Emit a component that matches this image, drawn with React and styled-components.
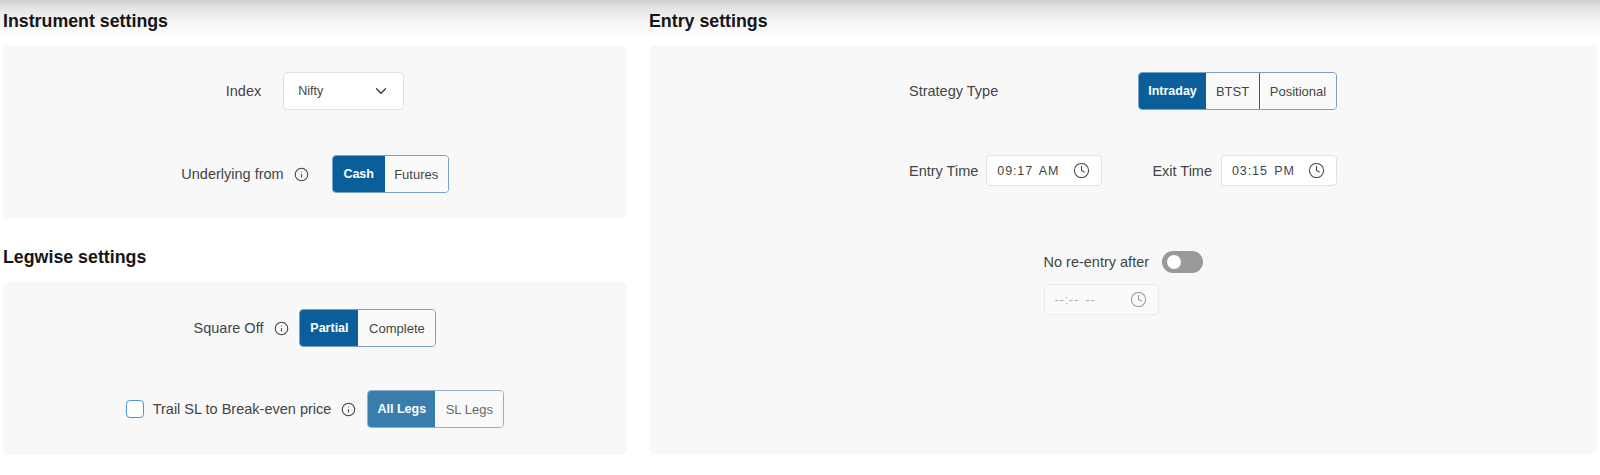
import React from "react";
import styled, { createGlobalStyle } from "styled-components";
import { ChevronDown, Clock, Info } from "lucide-react";

const GlobalStyle = createGlobalStyle`
  html, body {
    margin: 0;
    padding: 0;
    background: #fff;
    font-family: "Liberation Sans", Arial, sans-serif;
    color: #333;
  }
`;

const Page = styled.div`
  display: grid;
  grid-template-columns: 624px 948px;
  column-gap: 22px;
  height: 475px;
  padding: 0 3px;
  box-sizing: border-box;
  background: linear-gradient(#cfcfcf 0, #e6e6e6 9px, #f6f6f6 24px, #fff 38px);
  overflow: hidden;
`;

const Column = styled.div`
  display: flex;
  flex-direction: column;
`;

const Heading = styled.h3`
  margin: 0;
  height: 42px;
  padding-bottom: 3px;
  display: flex;
  align-items: center;
  font-size: 17.8px;
  font-weight: 700;
  color: #151515;
`;

const LowerHeading = styled(Heading)`
  margin-top: 17px;
  height: 42px;
  padding-bottom: 4px;
`;

const Panel = styled.div`
  background: #f8f8f8;
  border-radius: 6px;
  display: flex;
  flex-direction: column;
  align-items: center;
  box-sizing: border-box;
  height: ${(p) => p.$height}px;
  padding-top: ${(p) => p.$top}px;
`;

const Row = styled.div`
  display: flex;
  align-items: center;
  height: 38px;
  margin-top: ${(p) => p.$mt || 0}px;
`;

const Label = styled.span`
  font-size: 14.5px;
  color: #444;
  white-space: nowrap;
  margin-right: ${(p) => p.$mr || 0}px;
`;

const InfoIcon = styled(Info)`
  width: 15px;
  height: 15px;
  color: #444;
  stroke-width: 1.7;
  margin: 0 ${(p) => p.$mr}px 0 ${(p) => p.$ml}px;
  flex-shrink: 0;
`;

const Select = styled.div`
  width: 121px;
  height: 38px;
  box-sizing: border-box;
  display: flex;
  align-items: center;
  justify-content: space-between;
  padding: 0 13px 0 14px;
  background: #fff;
  border: 1px solid #dbe3ea;
  border-radius: 4px;
  font-size: 12.5px;
  color: #444;
`;

const Toggle = styled.div`
  display: flex;
  height: 38px;
  box-sizing: border-box;
  border: 1px solid #7a9fc4;
  border-radius: 4px;
  overflow: hidden;
  opacity: ${(p) => (p.$faded ? 0.8 : 1)};
`;

const ToggleButton = styled.div`
  width: ${(p) => p.$width}px;
  display: flex;
  align-items: center;
  justify-content: center;
  box-sizing: border-box;
  font-size: ${(p) => (p.$active ? 12.5 : 13)}px;
  font-weight: ${(p) => (p.$active ? 700 : 400)};
  color: ${(p) => (p.$active ? "#fff" : "#444")};
  background: ${(p) => (p.$active ? "#0a5f9a" : "#fafafa")};
  border-left: ${(p) => (p.$divider ? "1px solid #1d5f9c" : "none")};
`;

const EntryGrid = styled.div`
  width: 428px;
  display: flex;
  flex-direction: column;
`;

const SpacedRow = styled(Row)`
  justify-content: space-between;
`;

const TimeRow = styled(SpacedRow)`
  height: 31px;
  margin-top: 45px;
`;

const TimeField = styled.div`
  display: flex;
  align-items: center;
`;

const TimeBox = styled.div`
  width: ${(p) => (p.$disabled ? 115 : 116)}px;
  height: 31px;
  box-sizing: border-box;
  display: flex;
  align-items: center;
  justify-content: space-between;
  padding: 0 11px 0 10px;
  background: ${(p) => (p.$disabled ? "#fafafa" : "#fff")};
  border: 1px solid ${(p) => (p.$disabled ? "#e8ecef" : "#dbe3ea")};
  border-radius: 4px;
  font-size: 12.5px;
  letter-spacing: 0.9px;
  word-spacing: 2px;
  color: ${(p) => (p.$disabled ? "#aaa" : "#444")};
`;

const ClockIcon = styled(Clock)`
  width: 17px;
  height: 17px;
  stroke-width: 1.5;
  color: ${(p) => (p.$disabled ? "#999" : "#444")};
`;

const ReEntry = styled.div`
  margin-top: 65px;
  width: 159px;
  display: flex;
  flex-direction: column;
`;

const SwitchRow = styled.div`
  display: flex;
  align-items: center;
  justify-content: space-between;
  height: 22px;
  margin-bottom: 11px;
`;

const Switch = styled.div`
  width: 41px;
  height: 22px;
  border-radius: 11px;
  background: #999;
  position: relative;

  &::after {
    content: "";
    position: absolute;
    top: 4px;
    left: 5px;
    width: 14px;
    height: 14px;
    border-radius: 50%;
    background: #fff;
  }
`;

const Checkbox = styled.span`
  width: 18px;
  height: 18px;
  box-sizing: border-box;
  border: 1px solid #4f94d8;
  border-radius: 4px;
  background: #fff;
  margin-right: 9px;
  flex-shrink: 0;
`;

const App = () => (
  <>
    <GlobalStyle />
    <Page>
      <Column>
        <Heading>Instrument settings</Heading>
        <Panel $height={174} $top={27}>
          <Row>
            <Label $mr={22}>Index</Label>
            <Select>
              Nifty
              <ChevronDown size={18} strokeWidth={1.6} color="#333" />
            </Select>
          </Row>
          <Row $mt={45}>
            <Label>Underlying from</Label>
            <InfoIcon $ml={10} $mr={23} />
            <Toggle>
              <ToggleButton $active $width={52}>Cash</ToggleButton>
              <ToggleButton $width={63}>Futures</ToggleButton>
            </Toggle>
          </Row>
        </Panel>
        <LowerHeading>Legwise settings</LowerHeading>
        <Panel $height={173} $top={27}>
          <Row>
            <Label>Square Off</Label>
            <InfoIcon $ml={11} $mr={10} />
            <Toggle>
              <ToggleButton $active $width={58}>Partial</ToggleButton>
              <ToggleButton $width={77}>Complete</ToggleButton>
            </Toggle>
          </Row>
          <Row $mt={43}>
            <Checkbox />
            <Label>Trail SL to Break-even price</Label>
            <InfoIcon $ml={10} $mr={11} />
            <Toggle $faded>
              <ToggleButton $active $width={67}>All Legs</ToggleButton>
              <ToggleButton $width={68}>SL Legs</ToggleButton>
            </Toggle>
          </Row>
        </Panel>
      </Column>
      <Column>
        <Heading>Entry settings</Heading>
        <Panel $height={409} $top={27}>
          <EntryGrid>
            <SpacedRow>
              <Label>Strategy Type</Label>
              <Toggle>
                <ToggleButton $active $width={67}>Intraday</ToggleButton>
                <ToggleButton $width={53}>BTST</ToggleButton>
                <ToggleButton $divider $width={77}>Positional</ToggleButton>
              </Toggle>
            </SpacedRow>
            <TimeRow>
              <TimeField>
                <Label $mr={8}>Entry Time</Label>
                <TimeBox>
                  09:17 AM
                  <ClockIcon />
                </TimeBox>
              </TimeField>
              <TimeField>
                <Label $mr={9}>Exit Time</Label>
                <TimeBox>
                  03:15 PM
                  <ClockIcon />
                </TimeBox>
              </TimeField>
            </TimeRow>
          </EntryGrid>
          <ReEntry>
            <SwitchRow>
              <Label>No re-entry after</Label>
              <Switch />
            </SwitchRow>
            <TimeBox $disabled>
              --:-- --
              <ClockIcon $disabled />
            </TimeBox>
          </ReEntry>
        </Panel>
      </Column>
    </Page>
  </>
);

export default App;
